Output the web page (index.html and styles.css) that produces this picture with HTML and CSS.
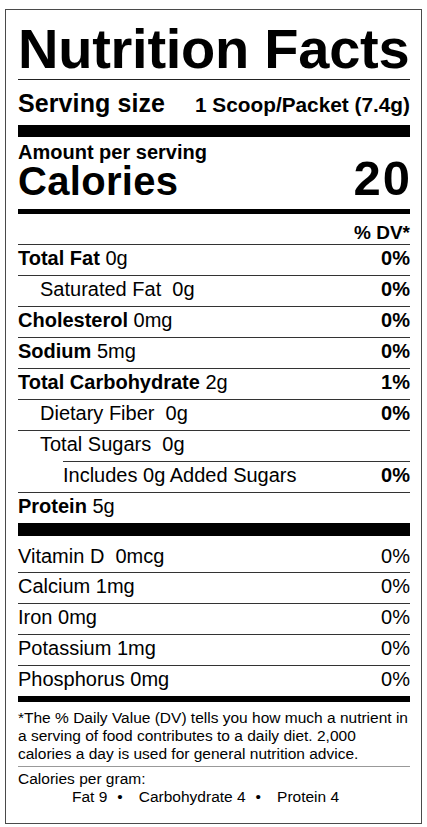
FILE: index.html
```html
<!DOCTYPE html>
<html lang="en">
<head>
  <meta charset="UTF-8">
  <title>Nutrition Facts</title>
  <link rel="stylesheet" href="styles.css">
</head>
<body>

  <div class="label">
    <h1 class="title">Nutrition Facts</h1>

    <div class="serving">
      <span class="serving-label">Serving size</span>
      <span class="serving-value">1 Scoop/Packet (7.4g)</span>
    </div>
    <div class="bar bar-lg"></div>

    <!-- Calories -->
    <div class="amount">Amount per serving</div>
    <div class="calories">
      <span class="cal-label">Calories</span>
      <span class="cal-value">20</span>
    </div>
    <div class="bar bar-md"></div>
    <div class="dv-head">% DV*</div>

    <!-- Macros -->
    <div class="row"><span><b>Total Fat</b> 0g</span><b>0%</b></div>
    <div class="row indent"><span>Saturated Fat &nbsp;0g</span><b>0%</b></div>
    <div class="row"><span><b>Cholesterol</b> 0mg</span><b>0%</b></div>
    <div class="row"><span><b>Sodium</b> 5mg</span><b>0%</b></div>
    <div class="row"><span><b>Total Carbohydrate</b> 2g</span><b>1%</b></div>
    <div class="row indent"><span>Dietary Fiber &nbsp;0g</span><b>0%</b></div>
    <div class="row indent"><span>Total Sugars &nbsp;0g</span></div>
    <div class="row indent-2"><span>Includes 0g Added Sugars</span><b>0%</b></div>
    <div class="row"><span><b>Protein</b> 5g</span></div>
    <div class="bar bar-lg bar-protein"></div>

    <!-- Vitamins & minerals -->
    <div class="row first"><span>Vitamin D &nbsp;0mcg</span><span>0%</span></div>
    <div class="row"><span>Calcium 1mg</span><span>0%</span></div>
    <div class="row"><span>Iron 0mg</span><span>0%</span></div>
    <div class="row"><span>Potassium 1mg</span><span>0%</span></div>
    <div class="row"><span>Phosphorus 0mg</span><span>0%</span></div>
    <div class="bar bar-sm"></div>

    <p class="footnote">
      *The % Daily Value (DV) tells you how much a nutrient in<br>
      a serving of food contributes to a daily diet. 2,000<br>
      calories a day is used for general nutrition advice.
    </p>

    <div class="per-gram">
      <div>Calories per gram:</div>
      <div class="per-gram-line">Fat 9<span class="dot">•</span>Carbohydrate 4<span class="dot">•</span>Protein 4</div>
    </div>
  </div>

</body>
</html>
```

FILE: styles.css
```css
body {
  margin: 0;
  background: #fff;
  color: #000;
  font-family: "Liberation Sans", Arial, Helvetica, sans-serif;
}

.label {
  box-sizing: border-box;
  width: 417px;
  margin: 9px 0 0 5px;
  padding: 0 11px 17px 12px;
  border: 1px solid #4a4a4a;
}

.title {
  margin: 0;
  padding: 10px 0 1px;
  font-size: 56px;
  line-height: 58px;
  font-weight: 700;
  letter-spacing: -0.25px;
  border-bottom: 1px solid #222;
}

.serving {
  display: flex;
  justify-content: space-between;
  align-items: baseline;
  padding: 10px 0 9px;
  font-weight: 700;
}
.serving-label { font-size: 25px; line-height: 26px; letter-spacing: 0.1px; }
.serving-value { font-size: 20.8px; line-height: 22px; }

.bar { background: #000; }
.bar-lg { height: 12px; }
.bar-protein { height: 13px; }
.bar-md { height: 5px; }
.bar-sm { height: 6px; }

.amount {
  padding-top: 4px;
  font-size: 20px;
  line-height: 22px;
  font-weight: 700;
}

.calories {
  display: flex;
  justify-content: space-between;
  align-items: baseline;
  padding-bottom: 10px;
  font-weight: 700;
}
.cal-label { font-size: 40px; line-height: 36px; letter-spacing: 0.3px; }
.cal-value {
  margin-right: -2px;
  font-size: 49px;
  line-height: 30px;
  letter-spacing: 2px;
}

.dv-head {
  padding-top: 8px;
  text-align: right;
  font-size: 19px;
  line-height: 22px;
  font-weight: 700;
}

.row {
  display: flex;
  justify-content: space-between;
  padding: 1px 0 5px;
  border-top: 1px solid #333;
  font-size: 20px;
  line-height: 24px;
}
.row.indent { padding-left: 22px; }
.row.indent-2 { margin-left: 45px; }
.row.first {
  border-top: 0;
  padding: 8px 0 4px;
}

.footnote {
  margin: 0;
  padding: 7px 0 3px;
  border-bottom: 1px solid #999;
  font-size: 15.5px;
  line-height: 18px;
}

.per-gram {
  padding-top: 3px;
  font-size: 15.5px;
  line-height: 18px;
}
.per-gram-line { padding-left: 54px; }
.dot { margin: 0 16px 0 10px; }
```
